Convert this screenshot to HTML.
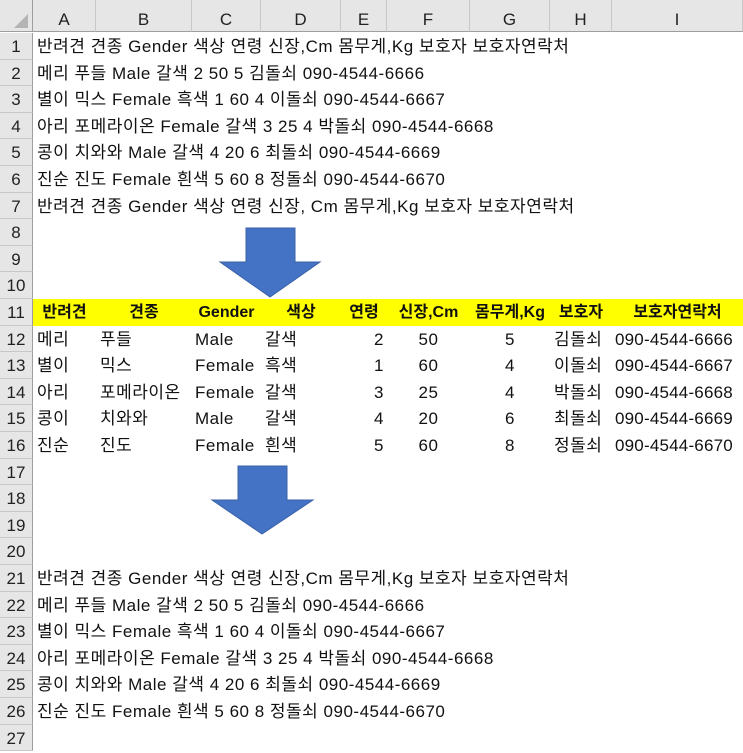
<!DOCTYPE html>
<html><head><meta charset="utf-8"><style>
body{margin:0;width:743px;height:726px;overflow:hidden;background:#fff;font-family:"Liberation Sans","Noto Sans CJK KR",sans-serif;position:relative}
.ch{position:absolute;top:0;height:32px;background:#e6e6e6;border-right:1px solid #c8c8c8;border-bottom:1px solid #9e9e9e;box-sizing:border-box;text-align:center;line-height:40px;font-size:17px;color:#222}
.rh{position:absolute;left:0;width:33px;background:#e6e6e6;border-right:1px solid #9e9e9e;border-bottom:1px solid #c8c8c8;box-sizing:border-box;text-align:center;font-size:17px;color:#222}
.c{position:absolute;font-size:17px;letter-spacing:0.5px;color:#111;white-space:nowrap;height:26px;line-height:26px}
.y{position:absolute;left:33px;width:710px;background:#ffff00}
.b{font-weight:bold;text-align:center;font-size:16px;letter-spacing:0}
</style></head><body>
<div class="ch" style="left:0;width:33px;border-right:1px solid #9e9e9e"><svg width="33" height="32" style="position:absolute;left:0;top:0"><polygon points="28,14 28,28 14,28" fill="#b4b4b4"/></svg></div>
<div class="ch" style="left:33px;width:63px">A</div>
<div class="ch" style="left:96px;width:96px">B</div>
<div class="ch" style="left:192px;width:69px">C</div>
<div class="ch" style="left:261px;width:80px">D</div>
<div class="ch" style="left:341px;width:46px">E</div>
<div class="ch" style="left:387px;width:83px">F</div>
<div class="ch" style="left:470px;width:80px">G</div>
<div class="ch" style="left:550px;width:62px">H</div>
<div class="ch" style="left:612px;width:131px">I</div>
<div class="y" style="top:299px;height:26.6px"></div>
<div id="rows"></div>
<svg width="743" height="726" style="position:absolute;left:0;top:0">
<polygon points="246,228 295,228 295,262 320,262 270,297 220,262 246,262" fill="#4472c4" stroke="#3a62a8" stroke-width="1"/>
<polygon points="238,466 287,466 287,500 313,500 262,534 212,500 238,500" fill="#4472c4" stroke="#3a62a8" stroke-width="1"/>
</svg>
<script>
var h=26.6,r=document.getElementById('rows'),s='';
for(var i=1;i<=27;i++){var t=33+(i-1)*h;s+='<div class="rh" style="top:'+t+'px;height:'+h+'px;line-height:'+(h+2)+'px">'+i+'</div>';}
var lines=["반려견 견종 Gender 색상 연령 신장,Cm 몸무게,Kg 보호자 보호자연락처","메리 푸들 Male 갈색 2 50 5 김돌쇠 090-4544-6666","별이 믹스 Female 흑색 1 60 4 이돌쇠 090-4544-6667","아리 포메라이온 Female 갈색 3 25 4 박돌쇠 090-4544-6668","콩이 치와와 Male 갈색 4 20 6 최돌쇠 090-4544-6669","진순 진도 Female 흰색 5 60 8 정돌쇠 090-4544-6670"];
function row(i,txt){var t=33+(i-1)*h+1;s+='<div class="c" style="left:37px;top:'+t+'px">'+txt+'</div>';}
for(var k=0;k<6;k++){row(1+k,lines[k]);row(21+k,lines[k]);}
row(7,"반려견 견종 Gender 색상 연령 신장, Cm 몸무게,Kg 보호자 보호자연락처");
var hd=[["반려견",33,63],["견종",96,96],["Gender",192,69],["색상",261,80],["연령",341,46],["신장,Cm",387,83],["몸무게,Kg",470,80],["보호자",550,62],["보호자연락처",612,131]];
var t11=33+10*h+1;
hd.forEach(function(x){s+='<div class="c b" style="left:'+x[1]+'px;width:'+x[2]+'px;top:'+t11+'px">'+x[0]+'</div>';});
var d=[["메리","푸들","Male","갈색",2,50,5,"김돌쇠","090-4544-6666"],["별이","믹스","Female","흑색",1,60,4,"이돌쇠","090-4544-6667"],["아리","포메라이온","Female","갈색",3,25,4,"박돌쇠","090-4544-6668"],["콩이","치와와","Male","갈색",4,20,6,"최돌쇠","090-4544-6669"],["진순","진도","Female","흰색",5,60,8,"정돌쇠","090-4544-6670"]];
d.forEach(function(x,j){var t=33+(11+j)*h+1;
s+='<div class="c" style="left:37px;top:'+t+'px">'+x[0]+'</div>';
s+='<div class="c" style="left:100px;top:'+t+'px">'+x[1]+'</div>';
s+='<div class="c" style="left:195px;top:'+t+'px">'+x[2]+'</div>';
s+='<div class="c" style="left:265px;top:'+t+'px">'+x[3]+'</div>';
s+='<div class="c" style="left:341px;width:43px;text-align:right;top:'+t+'px">'+x[4]+'</div>';
s+='<div class="c" style="left:387px;width:83px;text-align:center;top:'+t+'px">'+x[5]+'</div>';
s+='<div class="c" style="left:470px;width:80px;text-align:center;top:'+t+'px">'+x[6]+'</div>';
s+='<div class="c" style="left:554px;top:'+t+'px">'+x[7]+'</div>';
s+='<div class="c" style="left:615px;letter-spacing:0.2px;top:'+t+'px">'+x[8]+'</div>';});
r.innerHTML=s;
</script>
</body></html>
